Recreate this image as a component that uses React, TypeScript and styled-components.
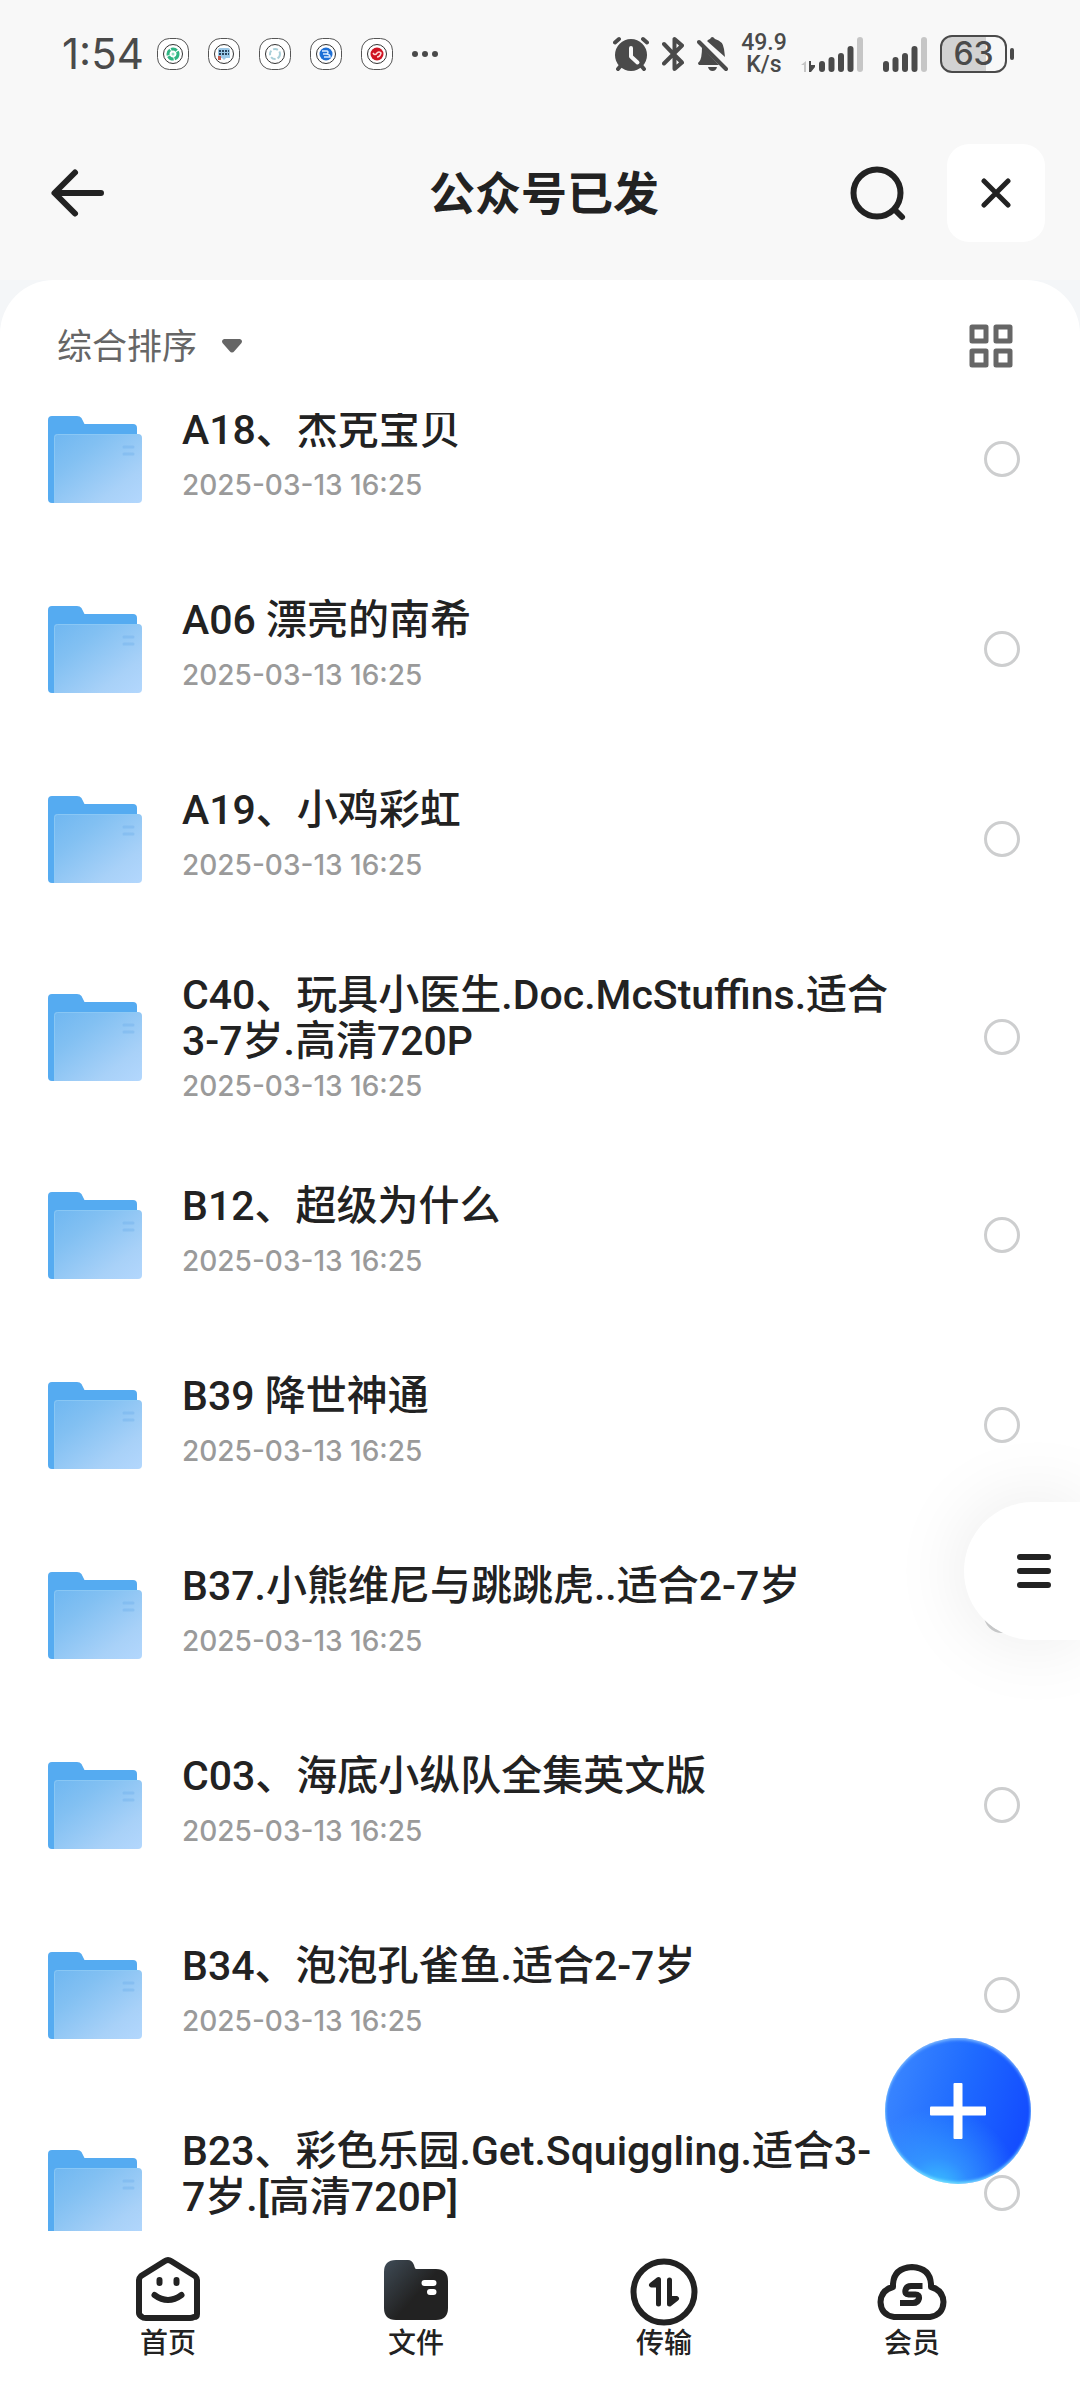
import React, { useState } from "react";
import styled, { createGlobalStyle } from "styled-components";

const GlobalStyle = createGlobalStyle`
  *, *::before, *::after { box-sizing: border-box; }
  body {
    margin: 0;
    background: #ffffff;
    color: #222222;
    font-family: Inter, "Noto Sans CJK SC", sans-serif;
    font-weight: 500;
  }
  button, input, select { font: inherit; color: inherit; }
  svg { display: block; flex: none; }
`;

const Screen = styled.div`
  position: relative;
  display: flex;
  flex-direction: column;
  height: 100vh;
  overflow: hidden;
  background: #f8f8f8;
`;

/* ---------- status bar ---------- */

const StatusBar = styled.div`
  flex: none;
  display: flex;
  align-items: center;
  justify-content: space-between;
  height: 108px;
  padding: 0 73px 0 62px;
  color: #4a4a4a;
`;

const StatusGroup = styled.div`
  display: flex;
  align-items: center;
  gap: 13px;
`;

const PowerGroup = styled(StatusGroup)`
  padding-left: 7px;
`;

const Clock = styled.time`
  font-size: 42px;
  line-height: 48px;
  font-weight: 400;
`;

const AppBadges = styled.div`
  display: flex;
  align-items: center;
  gap: 19px;
`;

const Speed = styled.div`
  display: flex;
  flex-direction: column;
  align-items: center;
  width: 46px;
  font-family: Roboto, sans-serif;
  font-size: 23px;
  line-height: 22px;
`;

const Battery = styled.div`
  position: relative;
  width: 67px;
  height: 38px;
  border: 2px solid #4a4a4a;
  border-radius: 12px;
  background: linear-gradient(90deg, #d2d2d2 70%, transparent 70%);
  font-size: 32px;
  line-height: 34px;
  text-align: center;

  &::after {
    content: "";
    position: absolute;
    top: 11px;
    right: -9px;
    width: 4px;
    height: 12px;
    border-radius: 2px;
    background: #4a4a4a;
  }
`;

/* ---------- header ---------- */

const Header = styled.header`
  flex: none;
  display: grid;
  grid-template-columns: 1fr auto 1fr;
  align-items: center;
  height: 172px;
  padding: 0 35px 2px 47px;
`;

const Title = styled.h1`
  margin: 0;
  padding-right: 4px;
  font-size: 46px;
  line-height: 60px;
  font-weight: 700;
`;

const HeaderActions = styled.div`
  display: flex;
  align-items: center;
  justify-content: flex-end;
  gap: 38px;
`;

const IconButton = styled.button`
  display: flex;
  align-items: center;
  justify-content: center;
  justify-self: start;
  padding: 0;
  border: 0;
  background: transparent;
  cursor: pointer;
`;

const CloseButton = styled(IconButton)`
  width: 98px;
  height: 98px;
  border-radius: 22px;
  background: #ffffff;
`;

/* ---------- sheet ---------- */

const SheetBack = styled.main`
  flex: 1;
  min-height: 0;
  display: flex;
  background: #f4f6f8;
`;

const Sheet = styled.section`
  flex: 1;
  min-width: 0;
  display: flex;
  flex-direction: column;
  border-radius: 54px 54px 0 0;
  background: #ffffff;
`;

const Toolbar = styled.div`
  flex: none;
  display: flex;
  align-items: center;
  justify-content: space-between;
  height: 133px;
  padding: 0 67px 2px 57px;
  color: #666666;
`;

const SortButton = styled(IconButton)`
  gap: 24px;
  font-size: 35px;
  line-height: 48px;
  font-weight: 400;
`;

const ListViewport = styled.div`
  flex: 1;
  min-height: 0;
  overflow: hidden;
`;

const FileList = styled.ul`
  margin: -49px 0 0;
  padding: 0;
  list-style: none;
`;

const FileRow = styled.li<{ $tall: boolean }>`
  display: flex;
  align-items: center;
  height: ${(p) => (p.$tall ? 206 : 190)}px;
  padding: 0 60px 0 48px;
`;

const FileInfo = styled.label<{ $tall: boolean }>`
  flex: 1;
  min-width: 0;
  display: flex;
  flex-direction: column;
  gap: ${(p) => (p.$tall ? 2 : 12)}px;
  margin: 0 80px 0 40px;
  padding: ${(p) => (p.$tall ? "4px 0 0" : "0 0 6px")};
`;

const FileName = styled.span`
  font-family: Roboto, "Noto Sans CJK SC", sans-serif;
  font-size: 41px;
  line-height: 46px;
  white-space: pre-line;
`;

const FileDate = styled.time`
  color: #9a9a9a;
  font-size: 28px;
  line-height: 40px;
`;

const Tick = styled.input`
  appearance: none;
  flex: none;
  width: 36px;
  height: 36px;
  margin: 0;
  border: 3px solid #cdcecf;
  border-radius: 50%;
  cursor: pointer;

  &:checked {
    border-color: #1a66ff;
    background: #1a66ff;
  }
`;

/* ---------- floating controls ---------- */

const SideHandle = styled.button`
  position: absolute;
  right: 0;
  bottom: 747px;
  display: flex;
  align-items: center;
  width: 116px;
  height: 138px;
  padding: 0 0 0 52px;
  border: 0;
  border-radius: 69px 0 0 69px;
  background: #ffffff;
  box-shadow: 0 0 80px rgba(0, 0, 0, 0.09);
  cursor: pointer;
`;

const AddButton = styled.button`
  position: absolute;
  right: 49px;
  bottom: 203px;
  display: flex;
  align-items: center;
  justify-content: center;
  width: 146px;
  height: 146px;
  padding: 0;
  border: 0;
  border-radius: 50%;
  background:
    radial-gradient(circle at 36% 104%, #3cc4ff 0%, rgba(60, 170, 255, 0.6) 18%, rgba(40, 120, 255, 0) 46%),
    linear-gradient(108deg, #3a86ff 8%, #1f6bff 48%, #1249ff 92%);
  box-shadow: inset 0 2px 3px rgba(150, 205, 255, 0.7), inset 0 -2px 3px rgba(130, 235, 255, 0.8);
  cursor: pointer;
`;

/* ---------- bottom tabs ---------- */

const Tabs = styled.nav`
  flex: none;
  display: grid;
  grid-template-columns: repeat(4, 1fr);
  height: 156px;
  padding: 24px 44px 0;
  background: #ffffff;
`;

const Tab = styled.a`
  display: flex;
  flex-direction: column;
  align-items: center;
  color: #222222;
  font-size: 28px;
  line-height: 32px;
  text-decoration: none;
`;

/* ---------- drawings ---------- */

const badgeArt: React.ReactNode[] = [
  <g key="g">
    <circle cx="16" cy="16" r="5" fill="none" stroke="#2fb583" strokeWidth="3" strokeDasharray="6 1" />
    <circle cx="16" cy="16" r="1.5" fill="#8fdcc0" />
  </g>,
  <g key="c">
    <path d="M10 12q0-2 2-2h8q2 0 2 2v8h-4l-2 2-2-2h-4z" fill="#9cc9e8" />
    <path d="M11 13h10M11 16h10" stroke="#27455f" strokeWidth="2" strokeDasharray="2 1" />
    <path d="M10 18h3v4h-3z" fill="#c65a4c" />
  </g>,
  <circle key="w" cx="16" cy="16" r="5" fill="#fff" stroke="#a9cfd9" strokeWidth="2" strokeDasharray="5 2" />,
  <g key="b">
    <circle cx="16" cy="16" r="6.500" fill="#1d6fd6" />
    <path d="M12 13h5q2 1 0 3h-4M16 16q4 0 4 3h-6" fill="none" stroke="#d7e9ff" strokeWidth="1.500" />
  </g>,
  <g key="r">
    <circle cx="16" cy="16" r="6.500" fill="#cf1322" />
    <path d="M12 15q2 3 4 0 2-2 4 0-1 4-4 4" fill="none" stroke="#ffd9d9" strokeWidth="1.500" />
  </g>,
];

const Badge = ({ index }: { index: number }) => (
  <svg width="32" height="32" viewBox="0 0 32 32" aria-hidden="true">
    <rect x="0.500" y="0.500" width="31" height="31" rx="12" fill="#fff" stroke="#555" />
    <circle cx="16" cy="16" r="9.500" fill="#fff" stroke="#333" />
    {badgeArt[index]}
  </svg>
);

const MoreDots = () => (
  <svg width="26" height="8" viewBox="0 0 26 8" fill="#4a4a4a" aria-hidden="true">
    <circle cx="3" cy="4" r="3" />
    <circle cx="13" cy="4" r="3" />
    <circle cx="23" cy="4" r="3" />
  </svg>
);

const AlarmIcon = () => (
  <svg width="36" height="36" viewBox="0 0 36 36" fill="none" stroke="#4a4a4a" strokeWidth="4" strokeLinecap="round" aria-hidden="true">
    <circle cx="18" cy="19" r="16" fill="#4a4a4a" stroke="none" />
    <path d="M2 6.500 6 3M34 6.500 30 3M7.500 30 5 33M28.500 30l2.500 3" />
    <path d="M18 12v8.500l6.500 6" stroke="#f8f8f8" strokeLinejoin="round" />
  </svg>
);

const BluetoothIcon = () => (
  <svg width="22" height="36" viewBox="0 0 22 36" fill="none" stroke="#4a4a4a" strokeWidth="4" strokeLinecap="round" strokeLinejoin="round" aria-hidden="true">
    <path d="M2 8 11.500 18 20 9.500 12.500 3v30l7.500-6.500L11.500 18 2 27.500" />
  </svg>
);

const BellOffIcon = () => (
  <svg width="31" height="36" viewBox="0 0 31 36" aria-hidden="true">
    <path d="M10 5Q12 3 13 3q2-4 5 0 8 2 9 10l1 8zM5 11 22 29H2q-2-2 0-3 3-3 3-15z" fill="#4a4a4a" />
    <path d="M11 31h9q-1 4-4.500 4T11 31z" fill="#4a4a4a" />
    <path d="M2 6 29 33" stroke="#4a4a4a" strokeWidth="4" strokeLinecap="round" />
  </svg>
);

const barTops = [24, 20, 16, 9, 0];

const Signal = ({ data }: { data?: boolean }) => (
  <svg width={data ? 63 : 44} height="35" viewBox={data ? "-19 0 63 35" : "0 0 44 35"} aria-hidden="true">
    {data && (
      <g>
        <path d="M-13 24v11h-2v-7h-3z" fill="#c6c6c6" />
        <path d="M-10 24h2v4h4v2l-4 5h-2z" fill="#4a4a4a" />
      </g>
    )}
    {barTops.map((top, i) => (
      <rect key={top} x={i * 9.5} y={top} width="6" height={35 - top} rx="3" fill={i === 4 ? "#c6c6c6" : "#4a4a4a"} />
    ))}
  </svg>
);

const BackIcon = () => (
  <svg width="60" height="60" viewBox="0 0 60 60" fill="none" stroke="#222" strokeWidth="6" strokeLinecap="round" strokeLinejoin="round" aria-hidden="true">
    <path d="M54 30H8M28 9.500 7.500 30 28 50.500" />
  </svg>
);

const SearchIcon = () => (
  <svg width="60" height="60" viewBox="0 0 60 60" fill="none" stroke="#222" strokeWidth="6" strokeLinecap="round" aria-hidden="true">
    <circle cx="28" cy="30" r="23.500" />
    <path d="m46 47 7 7" />
  </svg>
);

const CloseIcon = () => (
  <svg width="30" height="30" viewBox="0 0 30 30" stroke="#222" strokeWidth="5" strokeLinecap="round" aria-hidden="true">
    <path d="M3 3 27 27M27 3 3 27" />
  </svg>
);

const CaretIcon = () => (
  <svg width="22" height="14" viewBox="0 0 22 14" aria-hidden="true">
    <path d="M3 0h16q3 1 1.500 4l-7 8q-2.500 3-5 0l-7-8Q0 1 3 0z" fill="#666" />
  </svg>
);

const GridIcon = () => (
  <svg width="44" height="44" viewBox="0 0 44 44" fill="none" stroke="#666" strokeWidth="5" strokeLinejoin="round" aria-hidden="true">
    <path d="M3 3h14v14H3zM27 3h14v14H27zM3 27h14v14H3zM27 27h14v14H27z" />
  </svg>
);

const FolderIcon = ({ id }: { id: string }) => (
  <svg width="94" height="87" viewBox="0 0 94 87" aria-hidden="true">
    <defs>
      <linearGradient id={id} x1="0" y1="0" x2="1" y2="1">
        <stop offset="0" stopColor="#6fb7f1" />
        <stop offset="0.300" stopColor="#82c0f2" />
        <stop offset="0.750" stopColor="#a8d1f8" />
        <stop offset="1" stopColor="#b3d7fd" />
      </linearGradient>
    </defs>
    <path d="M4 0h25q3 0 4.500 2l3 6H85q4 0 4 4v20L10 87H4q-4 0-4-4V4q0-4 4-4z" fill="#55abf1" />
    <path d="M9 18h81q4 0 4 4v61q0 4-4 4H6V21q0-3 3-3z" fill={`url(#${id})`} />
    <path d="M6.500 86V21.500q0-3 3-3H90" fill="none" stroke="#8fcbf5" strokeOpacity="0.800" />
    <path d="M76 31h9M76 38h9" stroke="#6faeea" strokeOpacity="0.400" strokeWidth="3" strokeLinecap="round" />
  </svg>
);

const MenuIcon = () => (
  <svg width="36" height="36" viewBox="0 0 36 36" stroke="#222" strokeWidth="6" strokeLinecap="round" aria-hidden="true">
    <path d="M4 4h28M4 18h28M4 32h28" />
  </svg>
);

const PlusIcon = () => (
  <svg width="56" height="56" viewBox="0 0 56 56" fill="#fff" aria-hidden="true">
    <rect x="0" y="23.500" width="56" height="9" rx="1" />
    <rect x="23.500" y="0" width="9" height="56" rx="1" />
  </svg>
);

const HomeIcon = () => (
  <svg width="70" height="72" viewBox="0 0 70 72" fill="none" stroke="#222" strokeWidth="6" strokeLinejoin="round" strokeLinecap="round" aria-hidden="true">
    <path d="M32 6q3-2 6 0l24 15q2 2 2 4v34q0 3-3 3-2 1-4 1H13q-3 0-4-1-3-2-3-4V25q0-2 2-4z" />
    <path d="M21.500 40q13.500 10 27 0" />
    <path d="M26.500 25v3M43.500 25v3" strokeWidth="6" />
  </svg>
);

const FilesIcon = () => (
  <svg width="70" height="72" viewBox="0 0 70 72" aria-hidden="true">
    <defs>
      <linearGradient id="files-tab" x1="0" y1="0.100" x2="0.600" y2="0.600">
        <stop offset="0" stopColor="#3d4852" />
        <stop offset="0.900" stopColor="#222222" />
      </linearGradient>
    </defs>
    <path d="M15 5h12q4 0 6 5 1 4 2 4h20q12 0 12 12v27q0 12-12 12H15Q3 65 3 53V17Q3 5 15 5z" fill="url(#files-tab)" />
    <path d="M43.500 28h9M49 37h3.500" stroke="#fff" strokeWidth="6" strokeLinecap="round" />
  </svg>
);

const TransferIcon = () => (
  <svg width="70" height="72" viewBox="0 0 70 72" fill="none" stroke="#222" strokeLinecap="round" strokeLinejoin="round" aria-hidden="true">
    <circle cx="35" cy="37" r="30.500" strokeWidth="6" />
    <path d="M29.500 49V24.500L22.500 30H29.500M40.500 25V49l7-5.500H41" strokeWidth="5" fill="#222" />
  </svg>
);

const MemberIcon = () => (
  <svg width="70" height="72" viewBox="0 0 70 72" fill="none" stroke="#222" strokeWidth="6" strokeLinejoin="round" aria-hidden="true">
    <path d="M17 62h36q13-2 13.500-15Q66 35 54 32V29Q53 13 35 12 17 13 16 29v3Q4 35 3.500 47 4 60 17 62z" />
    <path d="M45.500 31H34q-4.500 0-5.500 4-1 4.500 3 4.500h7q4 0 3.500 4-1 4.500-6 4.500H23" strokeLinejoin="miter" />
  </svg>
);

/* ---------- data ---------- */

const stamp = "2025-03-13 16:25";

const files = [
  "A18、杰克宝贝",
  "A06 漂亮的南希",
  "A19、小鸡彩虹",
  "C40、玩具小医生.Doc.McStuffins.适合\n3-7岁.高清720P",
  "B12、超级为什么",
  "B39 降世神通",
  "B37.小熊维尼与跳跳虎..适合2-7岁",
  "C03、海底小纵队全集英文版",
  "B34、泡泡孔雀鱼.适合2-7岁",
  "B23、彩色乐园.Get.Squiggling.适合3-\n7岁.[高清720P]",
];

const tabs = [
  { label: "首页", href: "#home", Icon: HomeIcon },
  { label: "文件", href: "#files", Icon: FilesIcon },
  { label: "传输", href: "#transfer", Icon: TransferIcon },
  { label: "会员", href: "#member", Icon: MemberIcon },
];

export default function App() {
  const [picked, setPicked] = useState<number[]>([]);
  const toggle = (i: number) =>
    setPicked((now) => (now.includes(i) ? now.filter((n) => n !== i) : [...now, i]));

  return (
    <Screen>
      <GlobalStyle />
      <StatusBar>
        <StatusGroup>
          <Clock>1:54</Clock>
          <AppBadges>
            {badgeArt.map((_, i) => (
              <Badge key={i} index={i} />
            ))}
            <MoreDots />
          </AppBadges>
        </StatusGroup>
        <StatusGroup>
          <AlarmIcon />
          <BluetoothIcon />
          <BellOffIcon />
          <Speed>
            <span>49.9</span>
            <span>K/s</span>
          </Speed>
          <Signal data />
          <PowerGroup>
            <Signal />
            <Battery>63</Battery>
          </PowerGroup>
        </StatusGroup>
      </StatusBar>

      <Header>
        <IconButton type="button" aria-label="返回">
          <BackIcon />
        </IconButton>
        <Title>公众号已发</Title>
        <HeaderActions>
          <IconButton type="button" aria-label="搜索">
            <SearchIcon />
          </IconButton>
          <CloseButton type="button" aria-label="关闭">
            <CloseIcon />
          </CloseButton>
        </HeaderActions>
      </Header>

      <SheetBack>
        <Sheet>
          <Toolbar>
            <SortButton type="button">
              综合排序
              <CaretIcon />
            </SortButton>
            <IconButton type="button" aria-label="网格视图">
              <GridIcon />
            </IconButton>
          </Toolbar>
          <ListViewport>
            <FileList>
              {files.map((name, i) => {
                const tall = name.includes("\n");
                return (
                  <FileRow key={name} $tall={tall}>
                    <FolderIcon id={`folder-${i}`} />
                    <FileInfo htmlFor={`file-${i}`} $tall={tall}>
                      <FileName>{name}</FileName>
                      <FileDate>{stamp}</FileDate>
                    </FileInfo>
                    <Tick
                      type="checkbox"
                      id={`file-${i}`}
                      checked={picked.includes(i)}
                      onChange={() => toggle(i)}
                    />
                  </FileRow>
                );
              })}
            </FileList>
          </ListViewport>
        </Sheet>
      </SheetBack>

      <Tabs>
        {tabs.map(({ label, href, Icon }) => (
          <Tab key={href} href={href}>
            <Icon />
            {label}
          </Tab>
        ))}
      </Tabs>

      <SideHandle type="button" aria-label="菜单">
        <MenuIcon />
      </SideHandle>
      <AddButton type="button" aria-label="新建">
        <PlusIcon />
      </AddButton>
    </Screen>
  );
}
